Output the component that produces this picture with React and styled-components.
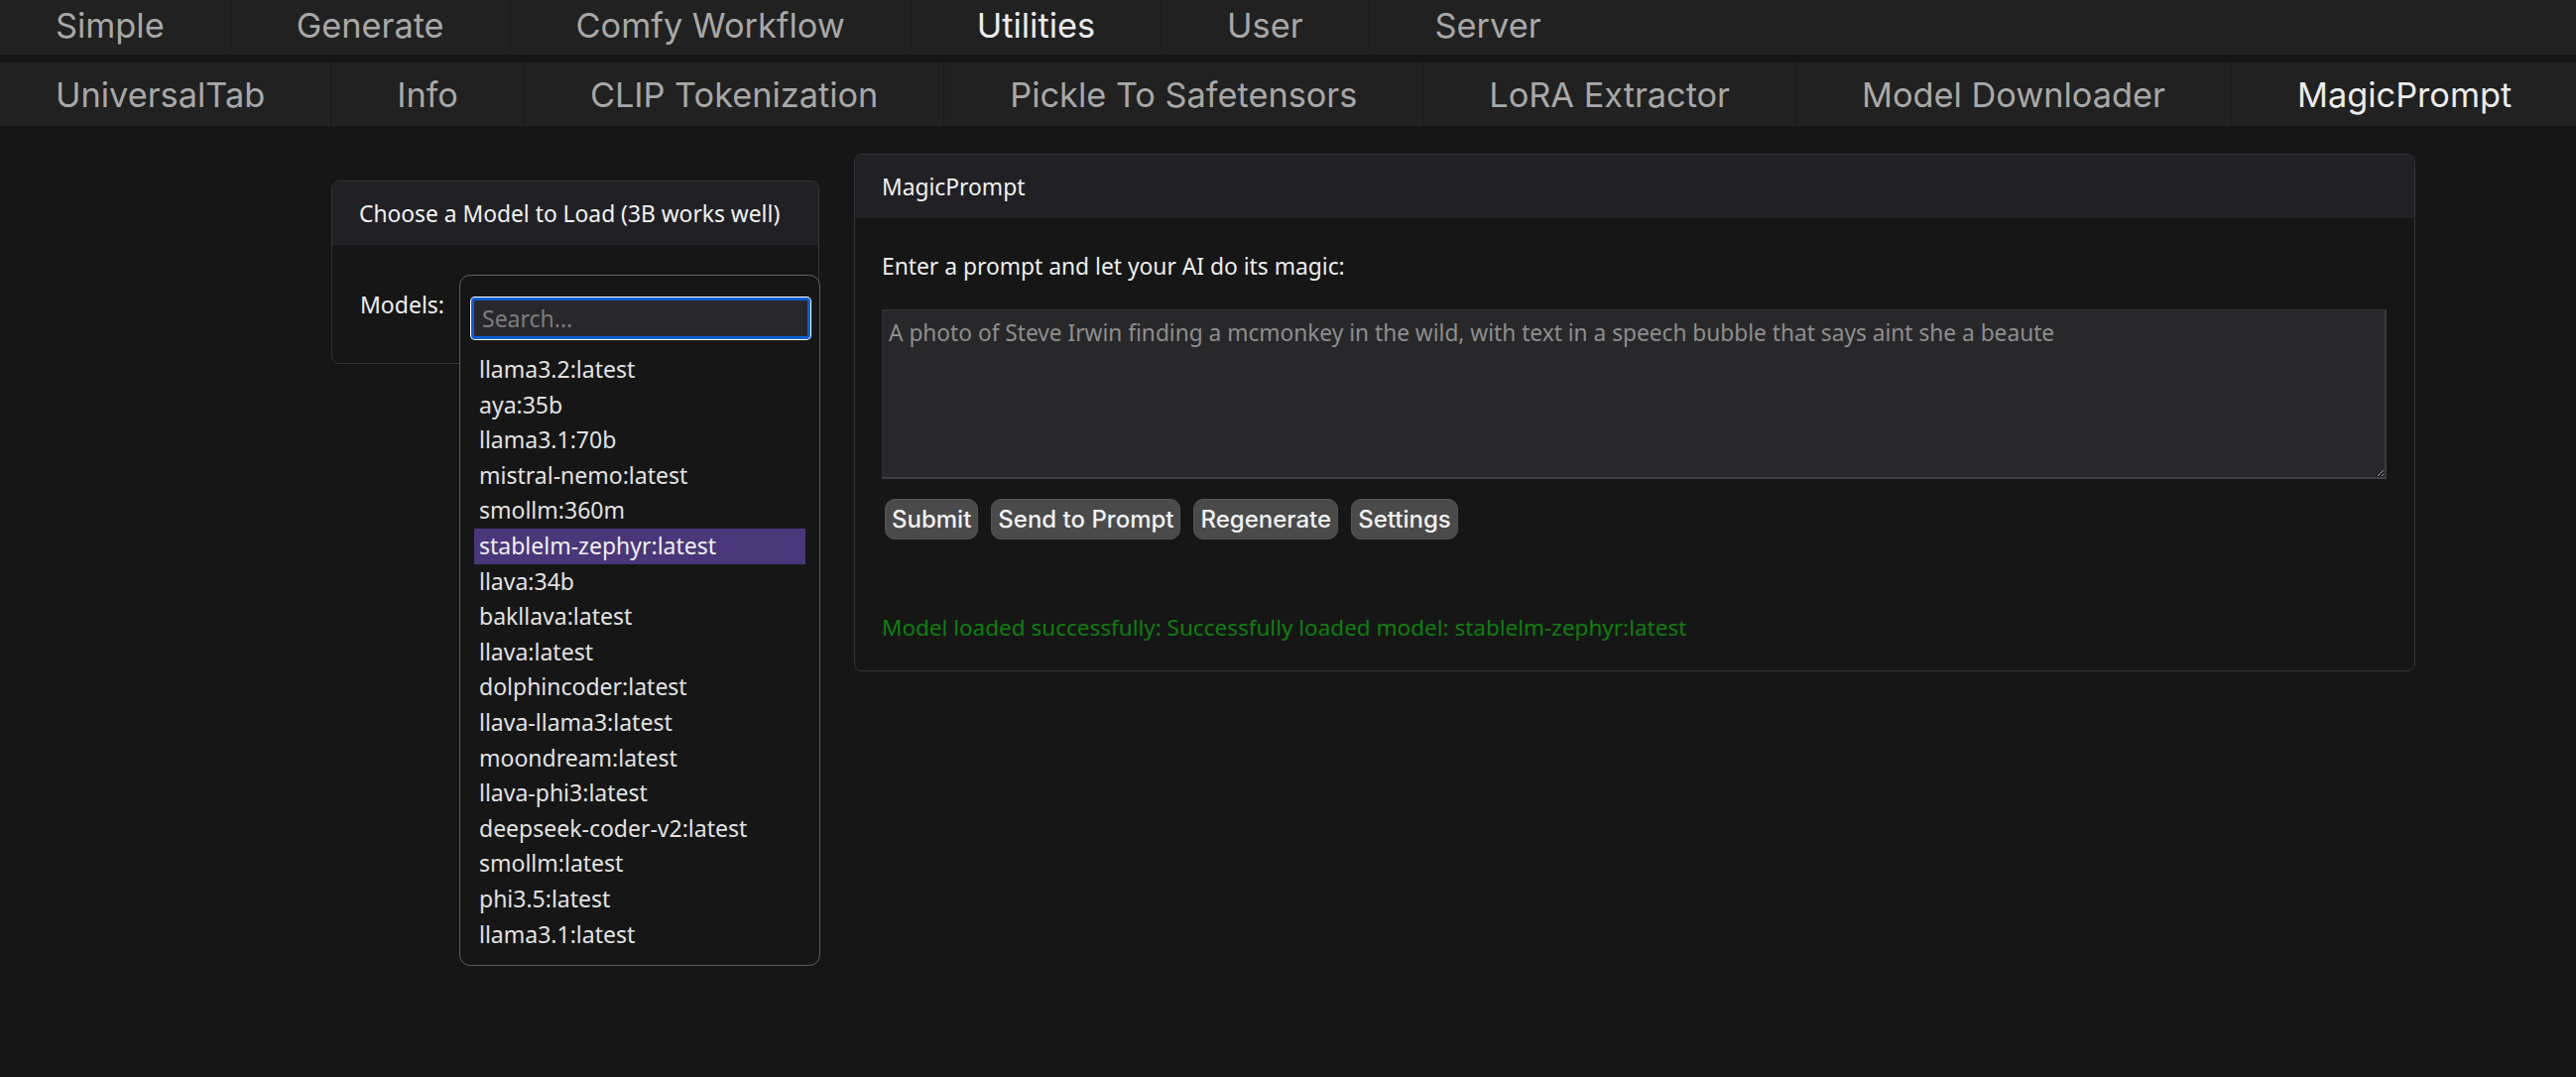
import React from "react";
import styled, { createGlobalStyle } from "styled-components";

const Global = createGlobalStyle`
  html, body { margin: 0; padding: 0; background: #161616; }
  body { font-family: "Noto Sans", "Open Sans", sans-serif; color: #eaeaea; }
  * { box-sizing: border-box; }
`;

const Page = styled.div`
  min-height: 1086px;
  background: #161616;
`;

const TabBar = styled.nav`
  display: flex;
  height: ${(p) => p.$h}px;
  padding-bottom: ${(p) => p.$pb || 0}px;
  margin-bottom: ${(p) => p.$mb || 0}px;
  background: #212121;
  font-family: Inter, "Liberation Sans", sans-serif;
  font-size: 34.3px;
`;

const Tab = styled.div`
  display: flex;
  align-items: center;
  padding: 0 66px 0 66px;
  color: ${(p) => (p.$active ? "#ececec" : "#a8a8a8")};
  border-right: 1px solid #1a1a1a;
  white-space: nowrap;
  &:first-child { padding-left: 56px; }
  &:last-child { border-right: none; }
`;

const Content = styled.div`
  display: flex;
  align-items: flex-start;
  gap: 35px;
  padding: 28px 0 0 334px;
`;

const Card = styled.section`
  width: ${(p) => p.$w}px;
  margin-top: ${(p) => p.$mt || 0}px;
  border: 1px solid #343438;
  border-radius: 8px;
  background: #161616;
`;

const CardHeader = styled.header`
  height: 64px;
  display: flex;
  align-items: center;
  padding: 0 27px;
  background: #212125;
  border-radius: 8px 8px 0 0;
  color: #f2f2f2;
  font-size: 22.8px;
`;

const ModelBody = styled.div`
  position: relative;
  height: 119px;
  display: flex;
  align-items: center;
  padding: 0 28px;
  font-size: 23px;
  color: #eeeeee;
`;

const Dropdown = styled.div`
  position: absolute;
  left: 128px;
  top: 30px;
  width: 364px;
  height: 697px;
  padding: 22px 11px 0 11px;
  background: #161616;
  border: 1px solid #5e5e5e;
  border-radius: 11px;
  z-index: 5;
`;

const Search = styled.input`
  display: block;
  width: 342px;
  height: 42px;
  padding: 0 8px;
  background: #28282c;
  border: 3px solid #0a5fd6;
  border-radius: 4px;
  box-shadow: 0 0 0 1px #ffffff;
  outline: none;
  color: #ddd;
  font-family: inherit;
  font-size: 23px;
  caret-color: #ddd;
  &::placeholder { color: #7d7d7d; }
`;

const List = styled.ul`
  list-style: none;
  margin: 13px 3px 0 3px;
  padding: 0;
`;

const Item = styled.li`
  height: 35.6px;
  line-height: 35.6px;
  padding-left: 5px;
  font-size: 23px;
  color: ${(p) => (p.$selected ? "#f0f0f0" : "#e2e2e2")};
  background: ${(p) => (p.$selected ? "#49377a" : "transparent")};
  white-space: nowrap;
`;

const PanelBody = styled.div`
  padding: 33px 27px 27px 27px;
  font-size: 22.8px;
`;

const Label = styled.div`
  line-height: 32px;
  color: #eeeeee;
`;

const PromptArea = styled.textarea`
  display: block;
  width: 1517px;
  height: 171px;
  margin-top: 27px;
  padding: 8px 6px;
  background: #28282b;
  border: 1px solid #323236;
  border-bottom: 2px solid #3e3e43;
  border-right: 2px solid #3a3a3f;
  color: #8e8e8e;
  font-family: inherit;
  font-size: 22.7px;
  line-height: 30px;
  resize: both;
  outline: none;
`;

const ButtonRow = styled.div`
  display: flex;
  gap: 13px;
  margin: 20px 0 0 3px;
`;

const Button = styled.button`
  height: 41px;
  padding: 0 6px;
  background: #4a4a4b;
  border: 1px solid #555556;
  border-radius: 10px;
  color: #f2f2f2;
  font-family: Inter, "Liberation Sans", sans-serif;
  font-size: 24px;
  font-weight: 500;
  cursor: pointer;
`;

const Status = styled.div`
  margin-top: 73px;
  line-height: 32px;
  color: #0d800d;
  font-size: 22.5px;
`;

const topTabs = ["Simple", "Generate", "Comfy Workflow", "Utilities", "User", "Server"];
const subTabs = [
  "UniversalTab",
  "Info",
  "CLIP Tokenization",
  "Pickle To Safetensors",
  "LoRA Extractor",
  "Model Downloader",
  "MagicPrompt",
];
const models = [
  "llama3.2:latest",
  "aya:35b",
  "llama3.1:70b",
  "mistral-nemo:latest",
  "smollm:360m",
  "stablelm-zephyr:latest",
  "llava:34b",
  "bakllava:latest",
  "llava:latest",
  "dolphincoder:latest",
  "llava-llama3:latest",
  "moondream:latest",
  "llava-phi3:latest",
  "deepseek-coder-v2:latest",
  "smollm:latest",
  "phi3.5:latest",
  "llama3.1:latest",
];

export default function App() {
  return (
    <Page>
      <Global />
      <TabBar $h={55} $pb={4} $mb={8}>
        {topTabs.map((t) => (
          <Tab key={t} $active={t === "Utilities"}>{t}</Tab>
        ))}
      </TabBar>
      <TabBar $h={64}>
        {subTabs.map((t) => (
          <Tab key={t} $active={t === "MagicPrompt"}>{t}</Tab>
        ))}
      </TabBar>
      <Content>
        <Card $w={492} $mt={27}>
          <CardHeader>Choose a Model to Load (3B works well)</CardHeader>
          <ModelBody>
            Models:
            <Dropdown>
              <Search placeholder="Search..." readOnly />
              <List>
                {models.map((m) => (
                  <Item key={m} $selected={m === "stablelm-zephyr:latest"}>{m}</Item>
                ))}
              </List>
            </Dropdown>
          </ModelBody>
        </Card>
        <Card $w={1574}>
          <CardHeader>MagicPrompt</CardHeader>
          <PanelBody>
            <Label>Enter a prompt and let your AI do its magic:</Label>
            <PromptArea
              readOnly
              defaultValue="A photo of Steve Irwin finding a mcmonkey in the wild, with text in a speech bubble that says aint she a beaute"
            />
            <ButtonRow>
              <Button>Submit</Button>
              <Button>Send to Prompt</Button>
              <Button>Regenerate</Button>
              <Button>Settings</Button>
            </ButtonRow>
            <Status>Model loaded successfully: Successfully loaded model: stablelm-zephyr:latest</Status>
          </PanelBody>
        </Card>
      </Content>
    </Page>
  );
}
